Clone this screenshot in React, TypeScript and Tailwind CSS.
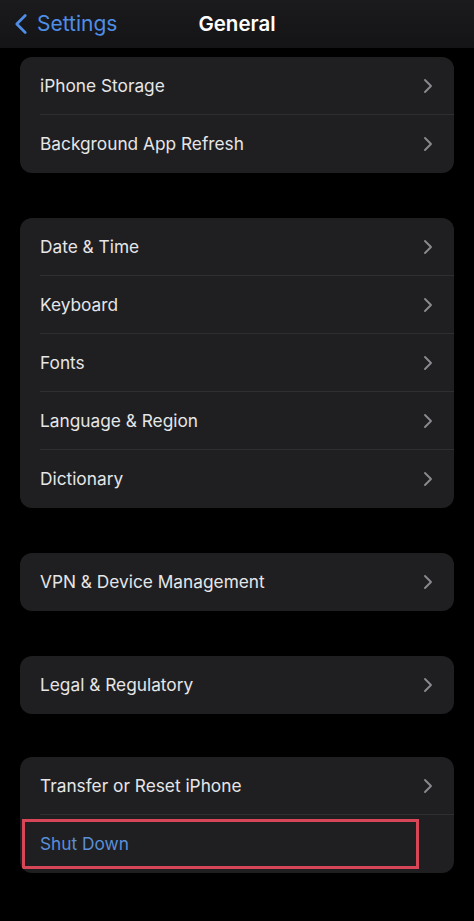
import { ChevronLeft, ChevronRight } from "lucide-react";

// Settings › General, dark mode. Groups are static data; the last row is highlighted.
const GROUPS: ReadonlyArray<ReadonlyArray<string>> = [
  ["iPhone Storage", "Background App Refresh"],
  ["Date & Time", "Keyboard", "Fonts", "Language & Region", "Dictionary"],
  ["VPN & Device Management"],
  ["Legal & Regulatory"],
  ["Transfer or Reset iPhone"],
];

function Row({ label, last }: { label: string; last: boolean }) {
  return (
    <div className="relative flex h-[58px] items-center pl-5 pr-[14px]">
      <span className="flex-1 text-[17.3px] text-[#e6e6e8]">{label}</span>
      <ChevronRight className="h-[24px] w-[24px] text-[#8a8a8e]" strokeWidth={1.9} />
      {!last && <div className="absolute bottom-0 left-5 right-0 h-px bg-[#2f2f32]" />}
    </div>
  );
}

export default function App() {
  return (
    <div
      className="flex min-h-[921px] w-[474px] flex-col bg-black"
      style={{ fontFamily: "Inter, 'Liberation Sans', sans-serif" }}
    >
      <header className="relative flex h-[48px] items-center bg-gradient-to-b from-[#1b1b1d] to-[#141416]">
        <div className="flex items-center pl-[4px] text-[#4f8ee6]">
          <ChevronLeft className="h-[34px] w-[34px]" strokeWidth={1.9} />
          <span className="-ml-[1px] text-[21px]">Settings</span>
        </div>
        <h1 className="absolute left-1/2 -translate-x-1/2 text-[20.5px] font-semibold text-white">
          General
        </h1>
      </header>

      <div className="flex flex-col px-5 pt-[9px]">
        {GROUPS.map((group, gi) => (
          <section
            key={gi}
            className={`overflow-hidden rounded-[12px] bg-[#1f1f21] ${
              gi === 0 ? "" : gi === GROUPS.length - 1 ? "mt-[43px]" : "mt-[45px]"
            }`}
          >
            {group.map((label, i) => (
              <Row
                key={label}
                label={label}
                last={i === group.length - 1 && gi !== GROUPS.length - 1}
              />
            ))}
            {gi === GROUPS.length - 1 && (
              <div className="flex h-[58px] items-center pl-[2px] pr-[35px]">
                <div className="flex h-[50px] flex-1 items-center border-[3px] border-[#d64657] pl-[15px]">
                  <span className="text-[17.3px] text-[#5a8fd8]">Shut Down</span>
                </div>
              </div>
            )}
          </section>
        ))}
      </div>
    </div>
  );
}
